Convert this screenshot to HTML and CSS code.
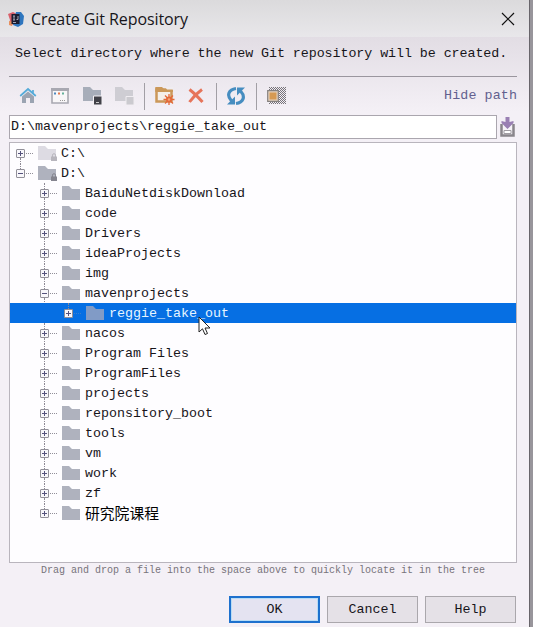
FILE: index.html
```html
<!DOCTYPE html>
<html lang="en">
<head>
<meta charset="utf-8">
<title>Create Git Repository</title>
<link rel="stylesheet" href="styles.css">
</head>
<body>
<svg class="defs" width="0" height="0">
  <symbol id="folder" viewBox="0 0 18 14"><path d="M0 0h7l3 3h8v11H0z" fill="currentColor"/></symbol>
  <symbol id="lock" viewBox="0 0 6 8"><path d="M1.5 4V2.2a1.5 1.5 0 0 1 3 0V4" fill="none" stroke="currentColor"/><path d="M0 3.5h6V8H0z" fill="currentColor"/></symbol>
</svg>
<main class="dialog">
  <header class="titlebar">
    <svg class="logo" width="16" height="16" viewBox="0 0 16 16"><path d="M0 3l5-2 4 2-2 11-6-1 1-4z" fill="#d9606b"/><path d="M1 10l4 1-1 4-3-1z" fill="#e88f5c"/><path d="M8 1l5 0 3 4-1 8-5 3-5-2z" fill="#2f76be"/><path d="M3.500 3h8v10h-8z" fill="#1b1d30"/><path d="M5 5h2M6 5v4M5 9h2M10 5v3.500H8.500M5 11.500h3" stroke="#b5b5c5" stroke-width=".9" fill="none"/></svg>
    <h1>Create Git Repository</h1>
    <svg class="close" width="14" height="14" viewBox="0 0 14 14"><path d="M1 1l12 12M13 1L1 13" stroke="#111" stroke-width="1.2"/></svg>
  </header>
  <section class="content">
    <p class="prompt">Select directory where the new Git repository will be created.</p>
    <nav class="toolbar">
      <svg class="home" width="18" height="18" viewBox="0 0 18 18"><path d="M3 9.500l6-5 6 5V16h-4v-5H7v5H3z" fill="#9ba4b2"/><path d="M1.200 9L9 2l7.800 7M14 3v3" fill="none" stroke="#55abd9" stroke-width="1.700"/></svg>
      <svg class="desktop" width="18" height="16" viewBox="0 0 18 16"><path d="M1 1h16v14H1z" fill="#f8f6f8" stroke="#a8a8b1" stroke-width="1.600"/><path d="M0 0h18v3H0z" fill="#a8a8b1"/><path d="M3 4.500h2v2H3z" fill="#5089be"/><path d="M7 4.500h2v2H7z" fill="#e57749"/><path d="M11 4.500h2v2h-2z" fill="#65b19b"/><path d="M9 12.500h1m1 0h1m1 0h1" stroke="#999"/></svg>
      <svg class="project" width="20" height="18" viewBox="0 0 20 18"><path d="M0 0h7l3 3h8v11H0z" fill="#a7adb9"/><path d="M10.500 9H19v9h-8.500z" fill="#414148" stroke="#f3f0f4"/><path d="M13 15.500h3" stroke="#ccc"/></svg>
      <svg class="module" width="20" height="18" viewBox="0 0 20 18"><path d="M0 0h7l3 3h8v11H0z" fill="#cecdd3"/><path d="M11 9.500h8V18h-8z" fill="#cbcacf" stroke="#f0edf1"/></svg>
      <i class="separator one"></i>
      <svg class="newfolder" width="20" height="18" viewBox="0 0 20 18"><path d="M1.500 2.500h15v12h-15z" fill="#f5efe9" stroke="#cb9859" stroke-width="2.500"/><path d="M.3 0H7l3 3h8v2H.3z" fill="#cb9859"/><path d="M10 0h8v2.500h-6z" fill="#f0edf1"/><path d="M14 7v11M8.500 12.500h11M10 8.500l8 8M18 8.500l-8 8" stroke="#e46839" stroke-width="1.300"/><circle cx="14" cy="12.500" r="3" fill="#e46839"/><circle cx="14" cy="12.500" r="1.200" fill="#f4a779"/></svg>
      <svg class="delete" width="16" height="16" viewBox="0 0 16 16"><path d="M1.500 1.500C6 5 10 9 14.500 14M14 1.500C9 5 5 9 1.500 14" fill="none" stroke="#e6745a" stroke-width="3"/></svg>
      <i class="separator two"></i>
      <svg class="refresh" width="20" height="20" viewBox="0 0 20 20"><path d="M5.500 15C0 9 3 3.500 10 2.500M14.500 5c5.500 6 2.500 11.500-4.500 12.500" fill="none" stroke="#468dc0" stroke-width="3.200"/><path d="M1 18.500h8v-8zM19 1.500h-8v8z" fill="#468dc0"/></svg>
      <i class="separator three"></i>
      <svg class="hidden" width="19" height="18" viewBox="0 0 19 18"><defs><pattern id="checks" width="2" height="2" patternUnits="userSpaceOnUse"><path d="M0 0h1v1H0zM1 1h1v1H1z" fill="#77747a"/></pattern></defs><path d="M2 0h17v17H2z" fill="url(#checks)"/><path d="M.7 3.700h10.600v10.600H.7z" fill="#e6d2bd" stroke="#85817f" stroke-width="1.200"/><path d="M2.500 5.500h7v7h-7z" fill="#d69a52"/></svg>
      <a class="hide">Hide path</a>
    </nav>
    <div class="pathline">
      <div class="path">D:\mavenprojects\reggie_take_out</div>
      <svg width="15" height="20" viewBox="0 0 15 20"><path d="M1.500 7v11.500h12V7" fill="#f6f3f7" stroke="#89858b" stroke-width="2.500"/><path d="M4 13.500h7v3H4z" fill="#fff" stroke="#a19da3"/><path d="M5.500 0h4v5l4-1v2l-6 6-6-6V4l4 1z" fill="#9a80b3"/></svg>
    </div>
    <div class="tree">
      <div class="row root first"><i class="toggle plus"></i><i class="dots"></i><span class="drive pale"><svg class="folder"><use href="#folder"/></svg><svg class="lock"><use href="#lock"/></svg></span><span>C:\</span></div>
      <div class="row root last"><i class="toggle"></i><i class="dots"></i><span class="drive"><svg class="folder"><use href="#folder"/></svg><svg class="lock"><use href="#lock"/></svg></span><span>D:\</span></div>
      <div class="row"><i class="toggle plus"></i><i class="dots"></i><svg class="folder"><use href="#folder"/></svg><span>BaiduNetdiskDownload</span></div>
      <div class="row"><i class="toggle plus"></i><i class="dots"></i><svg class="folder"><use href="#folder"/></svg><span>code</span></div>
      <div class="row"><i class="toggle plus"></i><i class="dots"></i><svg class="folder"><use href="#folder"/></svg><span>Drivers</span></div>
      <div class="row"><i class="toggle plus"></i><i class="dots"></i><svg class="folder"><use href="#folder"/></svg><span>ideaProjects</span></div>
      <div class="row"><i class="toggle plus"></i><i class="dots"></i><svg class="folder"><use href="#folder"/></svg><span>img</span></div>
      <div class="row"><i class="toggle"></i><i class="dots"></i><svg class="folder"><use href="#folder"/></svg><span>mavenprojects</span></div>
      <div class="row selected last"><i class="toggle plus"></i><i class="dots"></i><svg class="folder"><use href="#folder"/></svg><span>reggie_take_out</span>
        <svg class="cursor" width="13" height="20" viewBox="0 0 13 20"><path d="M1 1v15l3.500-3.200L7 18.500l2.500-1-2.500-5.500h5z" fill="#fff" stroke="#222"/></svg></div>
      <div class="row"><i class="toggle plus"></i><i class="dots"></i><svg class="folder"><use href="#folder"/></svg><span>nacos</span></div>
      <div class="row"><i class="toggle plus"></i><i class="dots"></i><svg class="folder"><use href="#folder"/></svg><span>Program Files</span></div>
      <div class="row"><i class="toggle plus"></i><i class="dots"></i><svg class="folder"><use href="#folder"/></svg><span>ProgramFiles</span></div>
      <div class="row"><i class="toggle plus"></i><i class="dots"></i><svg class="folder"><use href="#folder"/></svg><span>projects</span></div>
      <div class="row"><i class="toggle plus"></i><i class="dots"></i><svg class="folder"><use href="#folder"/></svg><span>reponsitory_boot</span></div>
      <div class="row"><i class="toggle plus"></i><i class="dots"></i><svg class="folder"><use href="#folder"/></svg><span>tools</span></div>
      <div class="row"><i class="toggle plus"></i><i class="dots"></i><svg class="folder"><use href="#folder"/></svg><span>vm</span></div>
      <div class="row"><i class="toggle plus"></i><i class="dots"></i><svg class="folder"><use href="#folder"/></svg><span>work</span></div>
      <div class="row"><i class="toggle plus"></i><i class="dots"></i><svg class="folder"><use href="#folder"/></svg><span>zf</span></div>
      <div class="row last"><i class="toggle plus"></i><i class="dots"></i><svg class="folder"><use href="#folder"/></svg><span class="cjk">研究院课程</span></div>
    </div>
    <p class="hint">Drag and drop a file into the space above to quickly locate it in the tree</p>
    <footer class="buttons"><button class="primary">OK</button><button>Cancel</button><button>Help</button></footer>
  </section>
</main>
</body>
</html>
```
FILE: styles.css
```css
* { box-sizing: border-box; }
body {
  margin: 0;
  height: 627px;
  overflow: hidden;
  background: #98959b;
  color: #17151a;
  font: 13.33px/20px "Liberation Mono", "Noto Sans CJK SC", monospace;
}
svg { display: block; flex: none; }
.defs { display: none; }
.dialog { width: 530px; height: 627px; border-right: 1px solid #68656b; background: #f4f0f6; }
.titlebar {
  display: flex;
  align-items: center;
  height: 37px;
  padding: 0 14px 0 8px;
  background: linear-gradient(#dbdadc, #e8e7ea);
}
h1 { margin: 0 auto 0 7px; font: 16px/24px "Open Sans", sans-serif; letter-spacing: -.08px; }
.content { padding: 0 12px 0 9px; background: linear-gradient(#e2dde4, #f4f0f6 75px); }
.prompt {
  margin: 0;
  height: 40px;
  padding: 7px 0 0 6px;
  border-bottom: 1px solid #9a969e;
  letter-spacing: -.06px;
  white-space: nowrap;
}
.toolbar { display: flex; align-items: center; height: 38px; }
.home { margin-left: 10px; }
.desktop { margin-left: 14px; }
.project { margin-left: 14px; }
.module { margin-left: 12px; }
.separator { width: 1px; height: 27px; background: #a29fa5; }
.one { margin-left: 9px; }
.newfolder { margin-left: 10px; }
.delete { margin-left: 13px; }
.two { margin-left: 12px; }
.refresh { margin-left: 9px; }
.three { margin-left: 10px; }
.hidden { margin-left: 10px; }
.hide { margin-left: auto; color: #62608e; letter-spacing: .1px; }
.pathline { display: flex; align-items: center; gap: 3px; height: 24px; margin-bottom: 3px; }
.path { width: 488px; height: 24px; padding: 1px 1px; border: 1px solid #aaa6ae; background: #fff; }
.tree { height: 421px; border: 1px solid #b9b5bd; background: #fefdff; }
.row { position: relative; display: flex; align-items: center; height: 20px; padding-left: 30px; white-space: pre; }
.root { padding-left: 6px; }
.toggle { position: relative; width: 9px; height: 9px; border: 1px solid #929099; border-radius: 1px; background: linear-gradient(90deg, #55527c, #55527c) center / 5px 1px no-repeat, #f8f7fb; }
.plus { background: linear-gradient(#55527c, #55527c) center / 1px 5px no-repeat, linear-gradient(#55527c, #55527c) center / 5px 1px no-repeat, #f8f7fb; }
.toggle::before,
.toggle::after { position: absolute; left: 3px; height: 6px; border-left: 1px dotted #8d8994; content: ""; }
.toggle::before { top: -7px; }
.toggle::after { top: 8px; }
.first .toggle::before,
.last .toggle::after { display: none; }
.dots { width: 7px; margin: 0 5px 0 1px; border-top: 1px dotted #918e98; }
.folder { width: 18px; height: 14px; color: #afb2be; }
.row > span:not(.drive) { margin-left: 5px; padding-top: 2px; }
.drive { position: relative; }
.lock { position: absolute; right: -1px; bottom: -1px; width: 6px; height: 8px; color: #85858f; }
.pale .folder { color: #dddbe3; }
.pale .lock { color: #b7b5bd; }
.selected { padding-left: 54px; background: #066fe3; color: #e6f5ff; }
.selected .dots { border-color: #3a7fd0; }
.selected .folder { color: #819bc6; }
.cursor { position: absolute; left: 188px; top: 13px; z-index: 2; }
.row > .cjk:not(.drive) { padding-top: 0; color: #000; font: 14.8px/20px "Noto Sans CJK SC", sans-serif; }
.hint { margin: 0; height: 33px; padding: 1px 0 0 32px; color: #77737a; font-size: 10px; line-height: 13px; white-space: nowrap; }
.buttons { display: flex; justify-content: flex-end; gap: 7px; padding-right: 1px; }
button { width: 91px; height: 27px; padding: 0; border: 1px solid #aaa7ac; background: #e5e1e7; color: #17151a; font: inherit; }
.primary { border: 2px solid #1e71ce; background: #e4e3f1; box-shadow: inset 0 0 0 1px #b8dcf5; }
```
